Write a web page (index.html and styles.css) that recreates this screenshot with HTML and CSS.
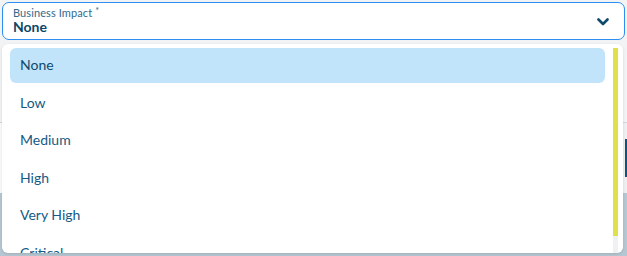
FILE: index.html
```html
<!DOCTYPE html>
<html>
<head>
<meta charset="utf-8">
<link rel="stylesheet" href="styles.css">
</head>
<body>
<div class="page">
  <div class="select">
    <div class="select-text">
      <div class="label">Business Impact <span class="req">*</span></div>
      <div class="value">None</div>
    </div>
    <svg class="chevron" width="12" height="8" viewBox="0 0 12 8"><polyline points="1.5,1.5 6,6 10.5,1.5" fill="none" stroke="#0d4a6e" stroke-width="2.6" stroke-linecap="round" stroke-linejoin="round"/></svg>
  </div>
  <div class="behind">
    <div class="bg-top"></div>
    <div class="bg-line"></div>
    <div class="bg-mid">
      <div class="bg-mid-left"></div>
      <div class="bg-mid-right"><div class="blue-block"></div></div>
    </div>
    <div class="bg-bottom"></div>
  </div>
  <div class="dropdown">
    <ul class="options">
      <li class="option selected">None</li>
      <li class="option">Low</li>
      <li class="option">Medium</li>
      <li class="option">High</li>
      <li class="option">Very High</li>
      <li class="option">Critical</li>
    </ul>
    <div class="scrollbar"><div class="thumb"></div></div>
  </div>
</div>
</body>
</html>
```
FILE: styles.css
```css
html, body {
  margin: 0;
  padding: 0;
}
body {
  width: 627px;
  height: 256px;
  overflow: hidden;
  font-family: Lato, "Open Sans", sans-serif;
  background: #f2f3f5;
}
.page {
  position: relative;
  width: 627px;
  height: 256px;
  display: flex;
  flex-direction: column;
}
.select {
  margin: 2px 2px 0 2px;
  height: 38px;
  box-sizing: border-box;
  border: 1px solid #2b8ef0;
  border-radius: 7px;
  background: #fff;
  display: flex;
  align-items: center;
  padding: 0 15px 0 10px;
  flex-shrink: 0;
}
.select-text {
  flex: 1;
  display: flex;
  flex-direction: column;
  margin-top: -2px;
}
.label {
  font-size: 11px;
  line-height: 12px;
  color: #32698c;
  letter-spacing: 0.1px;
}
.req {
  font-size: 9px;
  vertical-align: 3px;
}
.value {
  font-size: 14px;
  line-height: 16px;
  font-weight: 700;
  color: #0b4566;
}
.chevron {
  margin-top: 2px;
}
.behind {
  flex: 1;
  display: flex;
  flex-direction: column;
}
.bg-top {
  height: 82px;
  background: #f2f3f5;
}
.bg-line {
  height: 1px;
  background: #d3d6da;
}
.bg-mid {
  height: 70px;
  display: flex;
}
.bg-mid-left {
  flex: 1;
  background: #fbfbfb;
}
.bg-mid-right {
  width: 10px;
  background: #eeeff1;
  display: flex;
  justify-content: flex-end;
  padding-top: 16px;
}
.blue-block {
  width: 2px;
  height: 38px;
  background: #0a5686;
}
.bg-bottom {
  flex: 1;
  background: #b5c7d2;
}
.dropdown {
  position: absolute;
  left: 2px;
  top: 44px;
  width: 621px;
  height: 209px;
  background: #fff;
  border-radius: 6px;
  box-shadow: 0 1px 3px rgba(0,0,0,0.12);
  overflow: hidden;
  display: flex;
}
.options {
  list-style: none;
  margin: 0;
  padding: 4px 0 0 8px;
  flex: 1;
}
.option {
  height: 35px;
  margin-bottom: 2.5px;
  display: flex;
  align-items: center;
  padding: 0 0 2px 10px;
  box-sizing: border-box;
  font-size: 14px;
  color: #155a84;
  border-radius: 6px;
}
.option.selected {
  background: #c2e4fa;
  color: #0e4a6f;
}
.scrollbar {
  width: 5px;
  margin: 4px 5px 0 8px;
  background: #f0f1f3;
}
.thumb {
  height: 188px;
  background: #dfe04a;
}
```
